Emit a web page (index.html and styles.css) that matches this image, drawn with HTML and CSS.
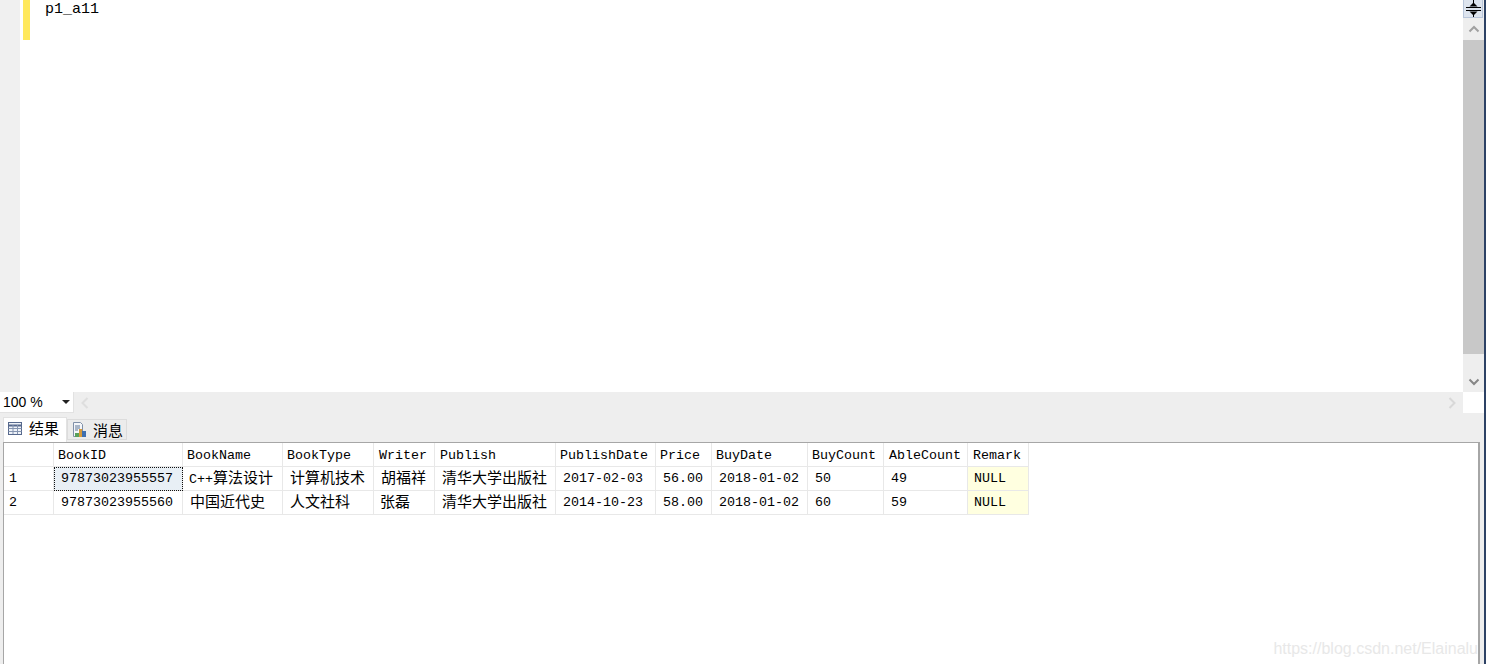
FILE: index.html
```html
<!DOCTYPE html>
<html lang="zh">
<head>
<meta charset="utf-8">
<title>Query results</title>
<link rel="stylesheet" href="styles.css">
</head>
<body>
<div class="app">
  <div class="main">
    <section class="editor-row">
      <div class="gutter"></div>
      <div class="change-col"><div class="change-mark"></div></div>
      <div class="code">p1_a11</div>
      <div class="vscroll">
        <button class="splitter"><svg width="15" height="18" viewBox="0 0 15 18"><path d="M7.500 0v4M7.500 14v4M0 7.500h15M0 10.500h15" stroke="#000" fill="none"/><path d="M3.500 6.500h8l-4-4zM3.500 11.500h8l-4 4z" fill="#000"/></svg></button>
        <div class="sb-btn"><svg width="12" height="8" viewBox="0 0 12 8"><path d="M1.500 6.500L6 2l4.500 4.500" stroke="#a0a0a0" stroke-width="2" fill="none"/></svg></div>
        <div class="thumb"></div>
        <div class="sb-track"></div>
        <div class="sb-btn"><svg width="12" height="8" viewBox="0 0 12 8"><path d="M1.500 1.500L6 6l4.500-4.500" stroke="#868686" stroke-width="2" fill="none"/></svg></div>
      </div>
    </section>
    <section class="zoom-row">
      <div class="zoom-box"><span>100 %</span><i class="caret"></i></div>
      <div class="hscroll">
        <svg width="8" height="12" viewBox="0 0 8 12"><path d="M6.500 1L1.500 6l5 5" stroke="#dedede" stroke-width="2" fill="none"/></svg>
        <svg width="8" height="12" viewBox="0 0 8 12"><path d="M1.500 1l5 5-5 5" stroke="#d8d8d8" stroke-width="2" fill="none"/></svg>
      </div>
      <div class="corner"></div>
    </section>
    <section class="results">
      <div class="tabs">
        <div class="tab active">
          <svg width="14" height="13" viewBox="0 0 14 13"><rect x=".5" y=".5" width="13" height="12" fill="#eef2f8" stroke="#56688c"/><path d="M.5 3.500h13" stroke="#56688c" stroke-width="2"/><path d="M.5 6.500h13M.5 9.500h13M5 3v9M9.500 3v9" stroke="#8494b0"/></svg>
          <span>结果</span>
        </div>
        <div class="tab">
          <svg width="15" height="17" viewBox="0 0 15 17"><path d="M1.500 1.500h7l2 2v12h-9z" fill="#f4f6fa" stroke="#8090a8"/><path d="M3 5h5M3 7h5M3 9h3" stroke="#5f7696"/><rect x="7" y="8" width="3" height="8" fill="#d69a3a"/><rect x="10" y="10" width="4" height="6" fill="#3f6fb0"/><rect x="3" y="12" width="4" height="4" fill="#5aa05a"/></svg>
          <span>消息</span>
        </div>
      </div>
      <div class="grid-panel">
        <table class="grid">
          <colgroup>
            <col class="w-idx"><col class="w-id"><col class="w-name"><col class="w-type"><col class="w-writer"><col class="w-pub"><col class="w-pd"><col class="w-price"><col class="w-bd"><col class="w-bc"><col class="w-ac"><col class="w-rm">
          </colgroup>
          <thead>
            <tr><th></th><th>BookID</th><th>BookName</th><th>BookType</th><th class="pad5">Writer</th><th class="pad5">Publish</th><th>PublishDate</th><th>Price</th><th>BuyDate</th><th>BuyCount</th><th class="pad5">AbleCount</th><th class="pad5">Remark</th></tr>
          </thead>
          <tbody>
            <tr>
              <td class="idx">1</td><td class="c-id selected">97873023955557</td><td class="c-name">C++<span class="cjk">算法设计</span></td><td class="c-type cjk">计算机技术</td><td class="c-writer cjk">胡福祥</td><td class="c-pub cjk">清华大学出版社</td><td>2017-02-03</td><td>56.00</td><td>2018-01-02</td><td>50</td><td>49</td><td class="c-null">NULL</td>
            </tr>
            <tr>
              <td class="idx">2</td><td class="c-id">97873023955560</td><td class="c-name2 cjk">中国近代史</td><td class="c-type cjk">人文社科</td><td class="c-writer2 cjk">张磊</td><td class="c-pub cjk">清华大学出版社</td><td>2014-10-23</td><td>58.00</td><td>2018-01-02</td><td>60</td><td>59</td><td class="c-null">NULL</td>
            </tr>
          </tbody>
        </table>
        <div class="watermark">https://blog.csdn.net/Elainalu</div>
      </div>
    </section>
  </div>
  <div class="edge"></div>
</div>
</body>
</html>
```
FILE: styles.css
```css
* { box-sizing: border-box; }
html, body { margin: 0; height: 100%; overflow: hidden; }
body { background: #eeeeee; font-family: "Liberation Mono", "Noto Sans CJK SC", monospace; color: #000; }
.app { display: flex; width: 1486px; height: 664px; }
.main { flex: 1; display: flex; flex-direction: column; min-width: 0; }
.edge { width: 2px; background: #2d4265; }

.editor-row { display: flex; height: 392px; background: #fff; }
.gutter { width: 20px; background: #f0f0f0; }
.change-col { width: 25px; padding-left: 3px; }
.change-mark { width: 7px; height: 40px; background: #ffe85c; }
.code { flex: 1; font-size: 15px; line-height: 17px; padding-top: 1px; color: #000; }
.vscroll { width: 21px; display: flex; flex-direction: column; background: #eeeeee; }
.splitter { height: 18px; width: 20px; padding: 0; border: 1px solid #b9c6da; border-top: 0; background: #dde4ee; display: flex; align-items: center; justify-content: center; overflow: hidden; }
.sb-btn { height: 22px; display: flex; align-items: center; justify-content: center; }
.vscroll .sb-btn:last-child { height: 20px; }
.thumb { height: 314px; background: #c8c8c8; }
.sb-track { height: 18px; }

.zoom-row { display: flex; height: 21px; }
.zoom-box { width: 74px; background: #fff; border: 1px solid #e2e2e2; border-width: 0 1px 1px 0; display: flex; align-items: center; justify-content: space-between; padding: 0 3px; font: 14px "Liberation Sans", sans-serif; }
.caret { width: 0; height: 0; border: 4px solid transparent; border-top-color: #222; border-bottom-width: 0; }
.hscroll { flex: 1; display: flex; align-items: center; justify-content: space-between; padding: 0 7px 0 7px; background: #eeeeee; }
.corner { width: 21px; background: #fff; }

.results { flex: 1; display: flex; flex-direction: column; padding: 4px 4px 0 3px; min-height: 0; }
.tabs { display: flex; height: 25px; align-items: flex-end; padding-bottom: 2px; font: 15px/20px "Noto Sans CJK SC", sans-serif; }
.tab { height: 21px; width: 60px; flex: none; display: flex; align-items: center; gap: 6px; padding: 0 0 0 4px; border: 1px solid #dcdcdc; background: #ececec; }
.tab.active { height: 25px; width: 64px; margin-bottom: -2px; padding: 0 0 4px 4px; background: #fff; border: 1px solid #e2e2e2; border-bottom: 0; gap: 7px; position: relative; }
.grid-panel { position: relative; flex: 1; background: #fff; border: 1px solid #a6a6a6; border-bottom: 0; border-right-width: 2px; overflow: hidden; }

.grid { border-collapse: separate; border-spacing: 0; table-layout: fixed; width: 1025px; font-size: 13.33px; }
.w-idx { width: 50px; } .w-id { width: 129px; } .w-name { width: 100px; } .w-type { width: 91px; }
.w-writer { width: 61px; } .w-pub { width: 121px; } .w-pd { width: 100px; } .w-price { width: 56px; }
.w-bd { width: 96px; } .w-bc { width: 76px; } .w-ac { width: 84px; } .w-rm { width: 61px; }
.grid th, .grid td { height: 24px; padding: 0 0 0 7px; border-right: 1px solid #e8e8e8; border-bottom: 1px solid #e8e8e8; white-space: nowrap; overflow: hidden; font-weight: 400; text-align: left; line-height: 16px; }
.grid th { padding: 2px 0 0 4px; }
.grid th.pad5 { padding-left: 5px; }
.cjk { font-size: 15px; font-family: "Noto Sans CJK SC", sans-serif; }
.grid td.cjk { font-size: 15px; font-family: "Noto Sans CJK SC", sans-serif; padding-bottom: 4px; }
.grid td.idx { padding-left: 5px; }
.grid td.c-name { padding-left: 6px; }
.grid td.c-writer2 { padding-left: 6px; }
.grid td.c-null { background: #ffffe0; padding-left: 6px; }
.grid td.selected { background: #e8eff5; outline: 1px dotted #111; outline-offset: -1px; }

.watermark { position: absolute; right: 0; bottom: 6px; font: 16px "Liberation Sans", sans-serif; color: #e8e8e8; }
```
